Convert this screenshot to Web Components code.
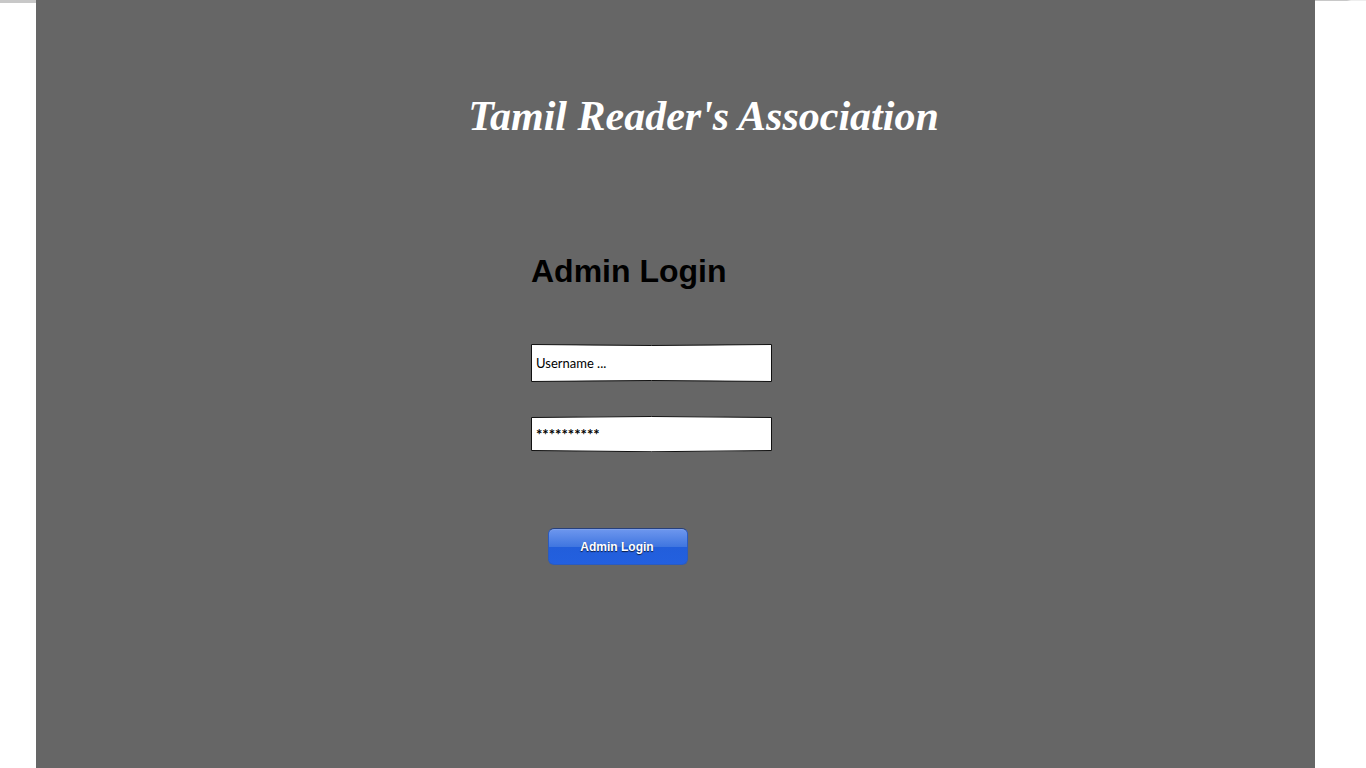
<!DOCTYPE html>
<html lang="en">
<head>
<meta charset="utf-8">
<title>Tamil Reader's Association</title>
<style>
  html, body { margin: 0; min-height: 100%; background: #fff; }
  body { font-family: "Liberation Sans", sans-serif; color: #000; }
</style>
</head>
<body>
<login-page>
  <site-title slot="title">Tamil Reader's Association</site-title>
  <login-form heading="Admin Login">
    <curved-field label="Username" name="username" value="Username ..."></curved-field>
    <curved-field label="Password" name="password" value="**********" bulge></curved-field>
    <glossy-button slot="action">Admin Login</glossy-button>
  </login-form>
</login-page>
<script>
class LoginPage extends HTMLElement {
  constructor() {
    super();
    this.attachShadow({ mode: "open" }).innerHTML = `
      <style>
        :host { display: grid; grid-template-columns: 36px minmax(0, 1fr) 51px; min-height: 100vh; background: #fff; }
        .left { border-top: 3px solid #c8c8c8; }
        .right { background: linear-gradient(90deg, #c8c8c8 32px, #eee 36px) top / 100% 1px no-repeat; }
        main { background: #666; display: flex; flex-direction: column; align-items: center; gap: 98px; padding: 86px 0 48px; box-sizing: border-box; }
        .title { padding-left: 56px; }
        .form { padding-right: 48px; }
      </style>
      <div class="left"></div>
      <main>
        <div class="title"><slot name="title"></slot></div>
        <div class="form"><slot></slot></div>
      </main>
      <div class="right"></div>`;
  }
}
class SiteTitle extends HTMLElement {
  constructor() {
    super();
    this.attachShadow({ mode: "open" }).innerHTML = `
      <style>
        :host { display: block; }
        h1 { margin: 0; font: italic bold 42px/60px "Liberation Serif", serif; color: #fff; white-space: nowrap; }
      </style>
      <h1><slot></slot></h1>`;
  }
}
class LoginForm extends HTMLElement {
  constructor() {
    super();
    this.attachShadow({ mode: "open" }).innerHTML = `
      <style>
        :host { display: block; width: 241px; }
        h2 { margin: 0 0 46px; font: bold 32px/54px "Liberation Sans", sans-serif; }
        .fields { display: flex; flex-direction: column; gap: 34px; }
        .action { padding: 76px 0 0 17px; }
      </style>
      <form>
        <h2></h2>
        <div class="fields"><slot></slot></div>
        <div class="action"><slot name="action"></slot></div>
      </form>`;
    this.shadowRoot.querySelector("h2").textContent = this.getAttribute("heading");
  }
}
class CurvedField extends HTMLElement {
  constructor() {
    super();
    const bulge = this.hasAttribute("bulge");
    const shape = bulge
      ? "M.5 1.5Q120.5 -.5 240.5 1.5V34.5Q120.5 37 .5 34.5Z"
      : "M.5 .5Q120.5 2.5 240.5 .5V37.5Q120.5 35.5 .5 37.5Z";
    const height = bulge ? 36 : 38;
    this.attachShadow({ mode: "open" }).innerHTML = `
      <style>
        :host { display: grid; height: ${height}px; }
        svg, input { grid-area: 1 / 1; width: 100%; height: 100%; box-sizing: border-box; }
        svg { display: block; }
        input { position: relative; border: 0; margin: 0; padding: 0 5px; background: transparent; outline: 0; color: #000; font: ${bulge ? "bold 15px" : "13px"}/20px Lato, sans-serif; }
      </style>
      <svg viewBox="0 0 241 ${height}" preserveAspectRatio="none" aria-hidden="true">
        <path d="${shape}" fill="#fff" stroke="#111"/>
      </svg>
      <input type="text" autocomplete="off">`;
    const input = this.shadowRoot.querySelector("input");
    input.name = this.getAttribute("name");
    input.value = this.getAttribute("value");
    input.setAttribute("aria-label", this.getAttribute("label"));
  }
}
class GlossyButton extends HTMLElement {
  constructor() {
    super();
    this.attachShadow({ mode: "open" }).innerHTML = `
      <style>
        :host { display: block; }
        button { display: block; width: 140px; height: 37px; padding: 0 2px 0 0; border: 1px solid #2a5bc0; border-top-color: #27407c; border-radius: 6px;
          background: linear-gradient(#6e97ee 0%, #4076e0 50%, #225edb 51%, #2360df 100%); box-shadow: inset 0 1px #7c9fea;
          color: #fff; font: bold 12px/16px "Liberation Sans", sans-serif; text-shadow: 0 1px 1px #0b1c44; }
      </style>
      <button type="button"><slot></slot></button>`;
  }
}
customElements.define("login-page", LoginPage);
customElements.define("site-title", SiteTitle);
customElements.define("login-form", LoginForm);
customElements.define("curved-field", CurvedField);
customElements.define("glossy-button", GlossyButton);
</script>
</body>
</html>
